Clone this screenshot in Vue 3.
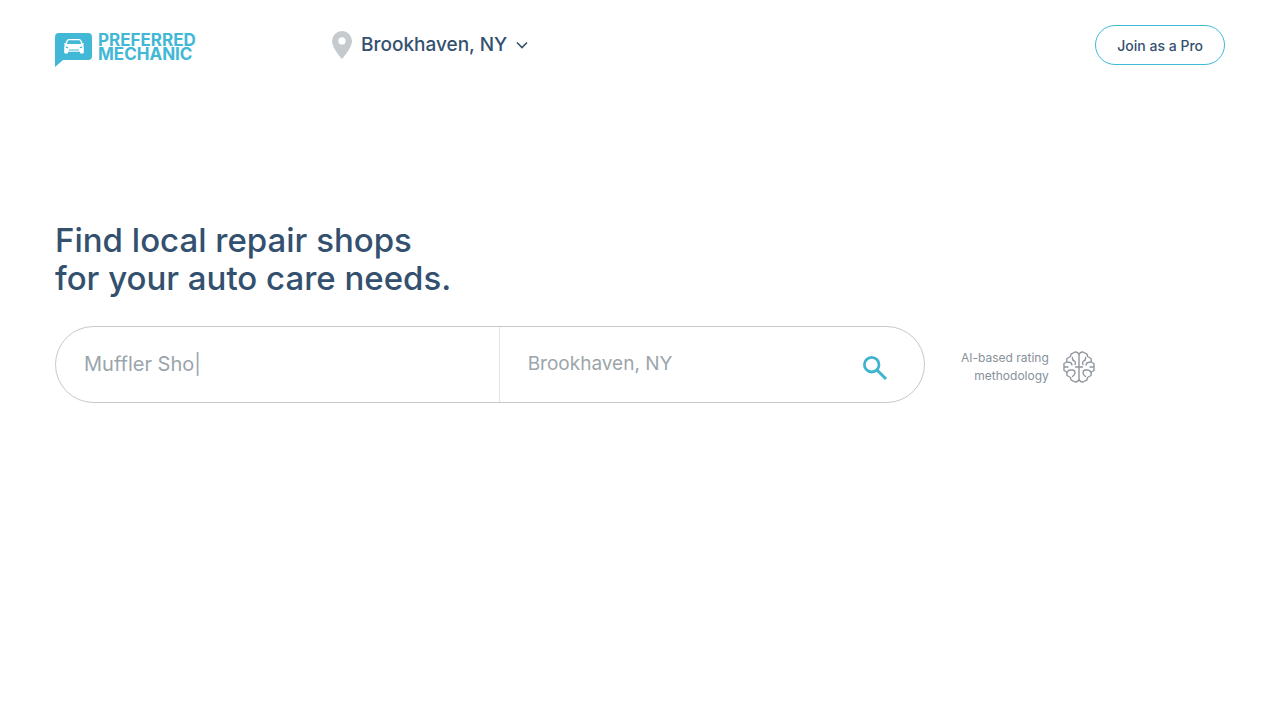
<script setup>
import { ref } from 'vue'

const service = ref('')
const place = ref('')
</script>

<template>
  <div class="page">
    <header class="header">
      <a class="logo" href="#" aria-label="Preferred Mechanic home">
        <svg width="38" height="34" viewBox="0 0 38 34" aria-hidden="true">
          <path fill="#41b8d5" d="M4 0H33Q37 0 37 4V23Q37 27 33 27H8L0 34V4Q0 0 4 0Z" />
          <path fill="#fff" d="M13.8 6H24.2Q25.8 6 26.4 7.5L27.7 10.6Q28.5 9.8 29 10.5Q29.3 11.4 28.1 11.8Q28.8 12.8 28.8 14V19.5Q28.8 20.6 27.7 20.6H26.2Q25 20.6 25 19.4V18.8H13V19.4Q13 20.6 11.8 20.6H10.3Q9.2 20.6 9.2 19.5V14Q9.2 12.8 9.9 11.8Q8.7 11.4 9 10.5Q9.5 9.8 10.3 10.6L11.6 7.5Q12.2 6 13.8 6Z" />
          <path fill="#41b8d5" d="M14 7.3H24Q24.8 7.3 25.1 8L26.2 10.9H11.8L12.9 8Q13.2 7.3 14 7.3ZM10.5 13.4L13.2 14.1Q13.4 15.2 12.3 15.2Q10.5 15 10.5 13.4ZM27.5 13.4L24.8 14.1Q24.6 15.2 25.7 15.2Q27.5 15 27.5 13.4ZM14 16.6H24V17.5H14Z" />
        </svg>
        <span class="logo-name">PREFERRED<br />MECHANIC</span>
      </a>

      <button class="location" type="button">
        <svg width="22" height="28" viewBox="0 0 22 28" aria-hidden="true">
          <path fill="#c5cace" fill-rule="evenodd" d="M11 0A10 10 0 0 0 1 10C1 17 11 28 11 28S21 17 21 10A10 10 0 0 0 11 0ZM11 6.3A3.6 3.6 0 1 1 11 13.5A3.6 3.6 0 0 1 11 6.3Z" />
        </svg>
        <span class="city">Brookhaven, NY</span>
        <svg width="14" height="8" viewBox="0 0 14 8" aria-hidden="true">
          <path fill="none" stroke="#34506f" stroke-width="1.6" d="M2 1.5L7 6.5L12 1.5" />
        </svg>
      </button>

      <button class="join" type="button">Join as a Pro</button>
    </header>

    <main class="main">
      <h1>Find local repair shops<br />for your auto care needs.</h1>
      <div class="search-row">
        <form class="search" role="search" @submit.prevent>
          <input v-model="service" class="service" type="text" aria-label="Service" placeholder="Muffler Sho|" />
          <input v-model="place" class="place" type="text" aria-label="Location" placeholder="Brookhaven, NY" />
          <button class="submit" type="submit" aria-label="Search">
            <svg width="26" height="26" viewBox="0 0 26 26" fill="none" stroke="#3fb4cf" aria-hidden="true">
              <circle cx="9.7" cy="9.7" r="7.3" stroke-width="2.8" />
              <path stroke-width="3" d="M15 15L24 24" />
            </svg>
          </button>
        </form>
        <a class="method" href="#">
          <span>AI-based rating<br />methodology</span>
          <svg width="32" height="32" viewBox="0 0 32 32" fill="none" stroke="#90979e" stroke-width="1.4" stroke-linejoin="round" stroke-linecap="round" aria-hidden="true">
            <path d="M16 3V29M12.5 16H19.5" />
            <path v-for="side in brainSides" :key="side" :transform="side" d="M16 3Q14 .6 12 1L8 3.2L7.5 5.5L4 7.5L3.6 11L1 12.5V19.5L3.6 21L4 24.5L7.5 26.5L8 28.8L12 31Q14 31.4 16 29M9.5 6.5Q9 9.5 11.5 10Q13 11 12 13.5M4 11L7 11.5Q9 12 9 14M1 16H5M4.5 21Q5 18.8 8 19H10Q12 19.5 12 21.5Q12 24 9.5 25.5" />
          </svg>
        </a>
      </div>
    </main>
  </div>
</template>

<script>
const brainSides = ['translate(0 0)', 'translate(32 0) scale(-1 1)']
</script>

<style>
body {
  margin: 0;
  background: #fff;
}
</style>

<style scoped>
.page {
  padding: 25px 55px;
  font-family: Inter, sans-serif;
  color: #34506f;
}

button {
  font: inherit;
  color: inherit;
  background: none;
  border: 0;
  padding: 0;
  cursor: pointer;
}

a {
  color: inherit;
  text-decoration: none;
}

svg {
  display: block;
  flex: none;
}

.header {
  display: flex;
  align-items: flex-start;
}

.logo {
  display: flex;
  gap: 5px;
  width: 276px;
  padding-top: 8px;
  color: #41b8d5;
}

.logo-name {
  font-size: 17px;
  font-weight: 700;
  line-height: 14px;
}

.location {
  display: flex;
  align-items: center;
  gap: 8px;
  height: 40px;
  font-size: 19px;
  font-weight: 500;
}

.city {
  padding-bottom: 2px;
}

.join {
  height: 40px;
  margin-left: auto;
  padding: 0 21px;
  border: 1px solid #41b8d5;
  border-radius: 20px;
  font-size: 14px;
  font-weight: 500;
}

.main {
  padding-top: 154px;
}

h1 {
  margin: 0 0 29px;
  font-size: 33px;
  font-weight: 500;
  line-height: 38px;
}

.search-row {
  display: flex;
  align-items: center;
  gap: 36px;
}

.search {
  box-sizing: border-box;
  display: flex;
  flex: 0 1 870px;
  height: 77px;
  border: 1px solid #c8c8c8;
  border-radius: 39px;
  overflow: hidden;
}

.search input {
  box-sizing: border-box;
  min-width: 0;
  padding: 0 28px 2px;
  border: 0;
  outline: 0;
  background: none;
  font: 400 20px Inter, sans-serif;
  color: #34506f;
}

.search input::placeholder {
  color: #9ba5ab;
  opacity: 1;
}

.service {
  flex: 0 0 51%;
}

.search .place {
  flex: 1;
  border-left: 1px solid #e3e3e3;
  font-size: 19px;
}

.submit {
  padding: 6px 36px 0 12px;
}

.method {
  display: flex;
  align-items: center;
  gap: 14px;
  padding-top: 4px;
  color: #87919b;
  font-size: 12px;
  line-height: 18px;
  text-align: right;
  white-space: nowrap;
}
</style>
